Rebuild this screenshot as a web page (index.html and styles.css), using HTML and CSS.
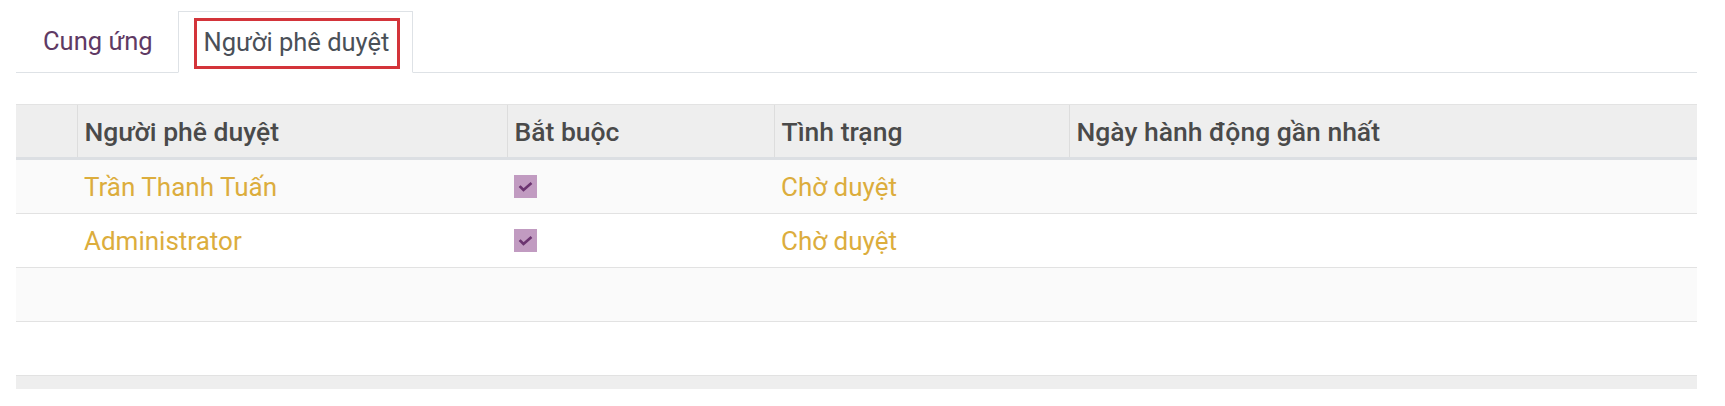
FILE: index.html
```html
<!DOCTYPE html>
<html lang="vi">
<head>
<meta charset="utf-8">
<title>Người phê duyệt</title>
<link rel="stylesheet" href="styles.css">
</head>
<body>
<div class="page">
  <ul class="tabs">
    <li class="tab"><span class="tab-label">Cung ứng</span></li>
    <li class="tab active"><span class="tab-label marked">Người phê duyệt</span></li>
  </ul>

  <table class="list">
    <colgroup>
      <col class="c-handle">
      <col class="c-user">
      <col class="c-req">
      <col class="c-state">
      <col class="c-date">
    </colgroup>
    <thead>
      <tr>
        <th></th>
        <th>Người phê duyệt</th>
        <th>Bắt buộc</th>
        <th>Tình trạng</th>
        <th>Ngày hành động gần nhất</th>
      </tr>
    </thead>
    <tbody>
      <tr class="odd">
        <td></td>
        <td class="warn">Trần Thanh Tuấn</td>
        <td><span class="check"><svg viewBox="0 0 23 23" width="23" height="23"><path d="M6.5 12 L9.5 15 L16.5 8.8" fill="none" stroke="#6b3470" stroke-width="2.6" stroke-linecap="square"/></svg></span></td>
        <td class="warn">Chờ duyệt</td>
        <td></td>
      </tr>
      <tr>
        <td></td>
        <td class="warn">Administrator</td>
        <td><span class="check"><svg viewBox="0 0 23 23" width="23" height="23"><path d="M6.5 12 L9.5 15 L16.5 8.8" fill="none" stroke="#6b3470" stroke-width="2.6" stroke-linecap="square"/></svg></span></td>
        <td class="warn">Chờ duyệt</td>
        <td></td>
      </tr>
      <tr class="odd">
        <td></td><td></td><td></td><td></td><td></td>
      </tr>
      <tr>
        <td></td><td></td><td></td><td></td><td></td>
      </tr>
    </tbody>
    <tfoot>
      <tr>
        <td></td><td></td><td></td><td></td><td></td>
      </tr>
    </tfoot>
  </table>
</div>
</body>
</html>
```

FILE: styles.css
```css
html, body {
  margin: 0;
  background: #ffffff;
}

body {
  font-family: Roboto, "Noto Sans", "DejaVu Sans", sans-serif;
  font-size: 26px;
  color: #4c4c4c;
}

.page {
  padding: 11px 28px 0 16px;
}

/* ---------- tabs ---------- */
.tabs {
  list-style: none;
  margin: 0;
  padding: 0;
  display: flex;
  height: 61px;
  border-bottom: 1px solid #dee2e6;
  font-size: 25.5px;
}

.tab {
  display: flex;
  align-items: center;
  padding: 0 25px 0 27px;
  color: #5f3a64;
}

.tab.active {
  color: #4a5058;
  background: #ffffff;
  border: 1px solid #dee2e6;
  border-bottom-color: #ffffff;
  box-sizing: border-box;
  margin-bottom: -1px;
  height: 62px;
  padding: 6px 12px 3px 15px;
  align-items: flex-start;
}

.tab-label {
  line-height: 1;
}

.marked {
  box-sizing: border-box;
  height: 51px;
  display: flex;
  align-items: center;
  padding: 0 8px 2px 7px;
  border: 3px solid #d3343a;
}

/* ---------- list table ---------- */
.list {
  margin-top: 31px;
  width: 100%;
  border-collapse: collapse;
  table-layout: fixed;
}

.c-handle { width: 61px; }
.c-user { width: 430px; }
.c-req { width: 267px; }
.c-state { width: 295px; }

.list th {
  height: 52px;
  padding: 0 7px;
  text-align: left;
  font-size: 26.5px;
  font-weight: 500;
  color: #4a4a4a;
  background: #eeeeee;
  border-top: 1px solid #e3e3e3;
  border-bottom: 3px solid #dcdfe3;
  border-left: 1px solid #dddddd;
  white-space: nowrap;
}

.list th:first-child {
  border-left: none;
}

.list tbody td {
  height: 53px;
  padding: 0 7px;
  border-bottom: 1px solid #e2e2e2;
  background: #ffffff;
  vertical-align: middle;
  white-space: nowrap;
}

.list tbody tr.odd td {
  background: #fafafa;
}

.warn {
  color: #dcad3d;
}

.check {
  display: block;
  width: 23px;
  height: 23px;
  background: #c19bc1;
}

.check svg {
  display: block;
}

.list tfoot td {
  height: 13px;
  padding: 0;
  background: #eeeeee;
  border-top: 1px solid #e0e0e0;
}
```
